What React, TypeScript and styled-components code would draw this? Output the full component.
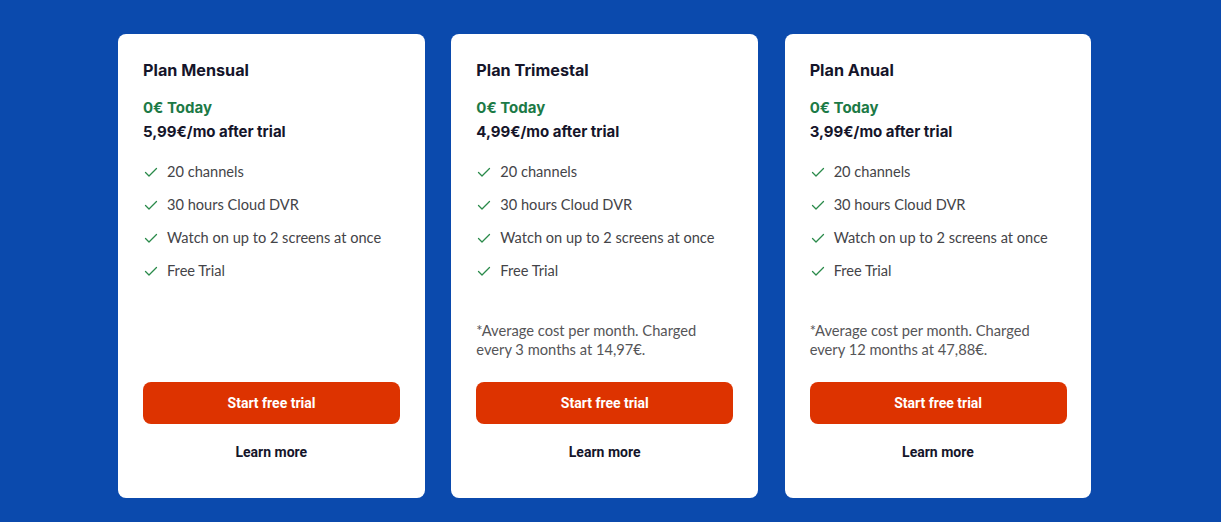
import React from "react";
import styled, { createGlobalStyle } from "styled-components";

const Global = createGlobalStyle`
  html, body { margin: 0; padding: 0; }
  body { background: #0b4aad; font-family: Lato, "Liberation Sans", sans-serif; }
`;

const Page = styled.div`
  width: 1221px;
  height: 522px;
  box-sizing: border-box;
  padding: 34px 0 0 118px;
  display: flex;
  gap: 26.67px;
  align-items: flex-start;
`;

const Card = styled.div`
  width: 306.67px;
  height: 464px;
  box-sizing: border-box;
  background: #ffffff;
  border-radius: 8px;
  padding: 26px 25px 0 25px;
  display: flex;
  flex-direction: column;
`;

const Heading = styled.div`
  font-family: Inter, "Liberation Sans", sans-serif;
  font-weight: 700;
  line-height: 20px;
`;

const Title = styled(Heading)`
  margin: 0;
  font-size: 16.2px;
  color: #15152a;
`;

const Today = styled(Heading)`
  margin-top: 18px;
  font-size: 15px;
  color: #1c7a46;
`;

const Price = styled(Heading)`
  margin-top: 4px;
  font-size: 15px;
  color: #15152a;
`;

const Features = styled.ul`
  list-style: none;
  margin: 20px 0 0 0;
  padding: 0;
  display: flex;
  flex-direction: column;
  gap: 13px;
`;

const Feature = styled.li`
  display: flex;
  align-items: center;
  gap: 9px;
  padding-left: 1px;
  font-size: 14.6px;
  color: #444448;
  line-height: 20px;
`;

const Note = styled.p`
  margin: 40px 0 0 0;
  font-size: 14.7px;
  line-height: 19px;
  color: #555558;
`;

const Spacer = styled.div`
  flex: 1;
`;

const Button = styled.button`
  width: 257px;
  height: 42px;
  border: none;
  border-radius: 8px;
  background: #dd3300;
  color: #ffffff;
  font-family: "Roboto", "Liberation Sans", sans-serif;
  font-weight: 700;
  font-size: 14px;
  cursor: pointer;
`;

const Learn = styled.a`
  display: block;
  text-align: center;
  margin: 19px 0 37px 0;
  font-family: "Roboto", "Liberation Sans", sans-serif;
  font-weight: 700;
  font-size: 14px;
  color: #15152a;
  line-height: 18px;
  cursor: pointer;
`;

const Check = () => (
  <svg width="14" height="14" viewBox="0 0 14 14" fill="none">
    <path d="M1.5 7.5 L5 11 L12.5 3.5" stroke="#2a8a4a" strokeWidth="1.3" strokeLinecap="round" strokeLinejoin="round" />
  </svg>
);

const features = ["20 channels", "30 hours Cloud DVR", "Watch on up to 2 screens at once", "Free Trial"];

const plans = [
  { title: "Plan Mensual", price: "5,99€/mo after trial", note: null as null | string[] },
  { title: "Plan Trimestal", price: "4,99€/mo after trial", note: ["*Average cost per month. Charged", "every 3 months at 14,97€."] },
  { title: "Plan Anual", price: "3,99€/mo after trial", note: ["*Average cost per month. Charged", "every 12 months at 47,88€."] },
];

export default function App() {
  return (
    <>
      <Global />
      <Page>
        {plans.map((p) => (
          <Card key={p.title}>
            <Title as="h2">{p.title}</Title>
            <Today>0€ Today</Today>
            <Price>{p.price}</Price>
            <Features>
              {features.map((f) => (
                <Feature key={f}>
                  <Check />
                  {f}
                </Feature>
              ))}
            </Features>
            {p.note && (
              <Note>
                {p.note[0]}
                <br />
                {p.note[1]}
              </Note>
            )}
            <Spacer />
            <Button>Start free trial</Button>
            <Learn>Learn more</Learn>
          </Card>
        ))}
      </Page>
    </>
  );
}
